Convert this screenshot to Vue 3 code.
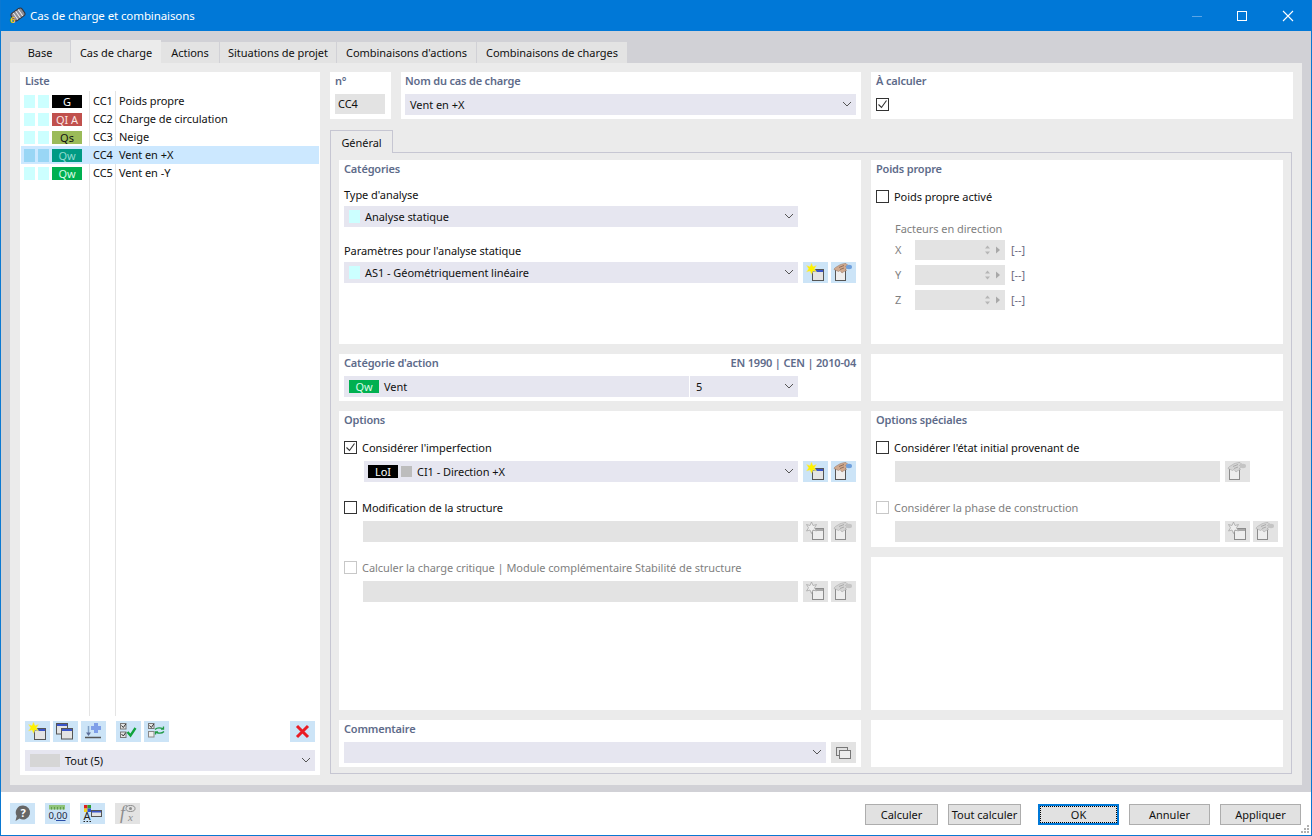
<script setup>
const tabs = ['Base', 'Cas de charge', 'Actions', 'Situations de projet', "Combinaisons d'actions", 'Combinaisons de charges']
const rows = [
  { cc: 'CC1', name: 'Poids propre', badge: 'G', cls: 'b-g' },
  { cc: 'CC2', name: 'Charge de circulation', badge: 'QI A', cls: 'b-q' },
  { cc: 'CC3', name: 'Neige', badge: 'Qs', cls: 'b-s' },
  { cc: 'CC4', name: 'Vent en +X', badge: 'Qw', cls: 'b-w', sel: true },
  { cc: 'CC5', name: 'Vent en -Y', badge: 'Qw', cls: 'b-w' },
]
const factors = ['X', 'Y', 'Z']
</script>

<template>
  <div class="window">
    <svg class="defs" width="0" height="0" aria-hidden="true">
      <defs>
        <symbol id="star" viewBox="0 0 25 21">
          <rect x="9.500" y="7.500" width="11" height="11" fill="#e4e4e4" stroke="#555" />
          <rect x="10" y="8" width="10" height="2" fill="#3b55c8" />
          <path d="M8.500 1L10 4.500 13.500 3.500 11.500 6.800 13.500 10 10 9 8.500 12.500 7 9 3.500 10 5.500 6.800 3.500 3.500 7 4.500z" fill="#fff200" stroke="#e8e4a0" stroke-width=".5" />
        </symbol>
        <symbol id="star-off" viewBox="0 0 25 21">
          <rect x="9.500" y="7.500" width="11" height="11" fill="#eee" stroke="#8c8c8c" />
          <rect x="10" y="8" width="10" height="2" fill="#a9a9a9" />
          <path d="M8.500 1L10 4.500 13.500 3.500 11.500 6.800 13.500 10 10 9 8.500 12.500 7 9 3.500 10 5.500 6.800 3.500 3.500 7 4.500z" fill="#eee" stroke="#a8a8a8" stroke-width=".8" />
        </symbol>
        <symbol id="hand" viewBox="0 0 25 21">
          <rect x="4.500" y="7.500" width="10" height="11" fill="#eee" stroke="#555" />
          <path d="M3 7.500C3.500 5.500 5.500 5 7 4c2-1.500 5-2.500 8-2.500l1.500 1.500-2 1.500 2 1-2 1.500 1 1.500-2.500 1-2 1.500-2-2.500-1.500 1z" fill="#d0a98e" stroke="#8f7060" stroke-width=".5" />
          <path d="M8 5.500l5-2M9 7.500l4-1.500" stroke="#7f6152" stroke-width=".8" />
          <ellipse cx="18" cy="5" rx="3" ry="2.200" fill="#6fa0dc" />
        </symbol>
        <symbol id="hand-off" viewBox="0 0 25 21">
          <rect x="4.500" y="7.500" width="10" height="11" fill="#eee" stroke="#8c8c8c" />
          <path d="M3 7.500C3.500 5.500 5.500 5 7 4c2-1.500 5-2.500 8-2.500l1.500 1.500-2 1.500 2 1-2 1.500 1 1.500-2.500 1-2 1.500-2-2.500-1.500 1z" fill="#d4d4d4" stroke="#a0a0a0" stroke-width=".5" />
          <path d="M8 5.500l5-2M9 7.500l4-1.500" stroke="#a0a0a0" stroke-width=".8" />
          <ellipse cx="18" cy="5" rx="3" ry="2.200" fill="#c4c4c4" />
        </symbol>
      </defs>
    </svg>

    <header class="titlebar">
      <svg class="logo" width="17" height="20" viewBox="0 -2 17 20">
        <g transform="rotate(-35 9 6.500)">
          <rect x="2.500" y="2" width="13" height="9" rx="2.500" fill="#8c8c94" stroke="#33333a" />
          <path d="M6 2.500v8M9 2.500v8M12 2.500v8" stroke="#eeeef2" stroke-width="1" />
        </g>
        <text x="1" y="15" class="logo-six">6</text>
      </svg>
      <span class="title-text">Cas de charge et combinaisons</span>
      <div class="controls">
        <svg width="12" height="12" viewBox="0 0 12 12"><path d="M2 6.500h10" stroke="#5ba5e6" /></svg>
        <svg width="12" height="12" viewBox="0 0 12 12"><rect x="1.500" y="1.500" width="9" height="9" fill="none" stroke="#fff" /></svg>
        <svg width="12" height="12" viewBox="0 0 12 12"><path d="M1 1l10 10M11 1L1 11" stroke="#fff" stroke-width="1.100" /></svg>
      </div>
    </header>

    <main class="main">
      <nav class="tabs">
        <div v-for="(t, i) in tabs" :key="t" class="tab" :class="{ active: i === 1 }">{{ t }}</div>
      </nav>

      <div class="content">
        <aside class="left panel">
          <div class="title">Liste</div>
          <div class="list">
            <span class="vline v1"></span>
            <span class="vline v2"></span>
            <div v-for="r in rows" :key="r.cc" class="row" :class="{ sel: r.sel }">
              <span class="sw"></span>
              <span class="sw"></span>
              <span class="badge" :class="r.cls">{{ r.badge }}</span>
              <span class="cc">{{ r.cc }}</span>
              <span class="nm">{{ r.name }}</span>
            </div>
          </div>
          <div class="toolbar">
            <button class="tool"><svg><use href="#star" /></svg></button>
            <button class="tool">
              <svg viewBox="0 0 25 21">
                <rect x="3.500" y="2.500" width="11" height="10.500" fill="#e4e4e4" stroke="#555" />
                <rect x="4" y="3" width="10" height="2" fill="#3b55c8" />
                <rect x="8.500" y="7.500" width="11" height="10.500" fill="#e4e4e4" stroke="#555" />
                <rect x="9" y="8" width="10" height="2" fill="#3b55c8" />
              </svg>
            </button>
            <button class="tool">
              <svg viewBox="0 0 25 21">
                <path d="M13 2h4v3h3v4h-3v3h-4V9h-3V5h3z" fill="#7f9fe8" />
                <path d="M7.500 5v8" stroke="#7f9fc4" stroke-width="1.500" />
                <path d="M5 11.500h5l-2.500 3.500z" fill="#5c6f99" />
                <path d="M4 16.500h16" stroke="#555" stroke-width="1.500" />
              </svg>
            </button>
            <span class="sep"></span>
            <button class="tool">
              <svg viewBox="0 0 25 21">
                <rect x="4.500" y="2.500" width="5.500" height="5.500" fill="#e4e4e4" stroke="#777" />
                <path d="M5.500 4.500l1.800 2 2.500-3.500" fill="none" stroke="#333" />
                <rect x="4.500" y="11" width="5.500" height="5.500" fill="#e4e4e4" stroke="#777" />
                <path d="M5.500 13l1.800 2 2.500-3.500" fill="none" stroke="#333" />
                <path d="M11.500 11l3 3.500 5-7.500" fill="none" stroke="#10a33c" stroke-width="2.300" />
              </svg>
            </button>
            <button class="tool">
              <svg viewBox="0 0 25 21">
                <rect x="4.500" y="2.500" width="5.500" height="5" fill="#e4e4e4" stroke="#777" />
                <path d="M5.500 4.500l1.800 2 2.500-3.500" fill="none" stroke="#333" />
                <rect x="4.500" y="10.500" width="5.500" height="5.500" fill="#eee" stroke="#888" />
                <path d="M11 8.500c2-2 5-2 8-.8M19.500 5.500v2.500h-2.500M20 10.500c-2 2-5 2-8 .8M11.500 13.500V11h2.500" fill="none" stroke="#1f9a45" stroke-width="1.300" />
              </svg>
            </button>
            <button class="tool del">
              <svg viewBox="0 0 25 21"><path d="M7 5l11 11M18 5L7 16" stroke="#ea1c24" stroke-width="3" /></svg>
            </button>
          </div>
          <div class="combo all">
            <span class="all-sw"></span>
            <span>Tout (5)</span>
            <svg class="chev" width="10" height="6" viewBox="0 0 10 6"><path d="M1 1l4 4 4-4" fill="none" stroke="#555" /></svg>
          </div>
        </aside>

        <section class="right">
          <div class="top">
            <div class="panel">
              <div class="title">n°</div>
              <div class="num">CC4</div>
            </div>
            <div class="panel name-panel">
              <div class="title">Nom du cas de charge</div>
              <div class="combo tight name-combo">
                <span>Vent en +X</span>
                <svg class="chev" width="10" height="6" viewBox="0 0 10 6"><path d="M1 1l4 4 4-4" fill="none" stroke="#555" /></svg>
              </div>
            </div>
            <div class="panel">
              <div class="title">À calculer</div>
              <div class="check on calc">
                <svg width="11" height="11" viewBox="0 0 11 11"><path d="M1.500 5.500l3 3 5-7" fill="none" stroke="#333" stroke-width="1.100" /></svg>
              </div>
            </div>
          </div>

          <div class="subtab">Général</div>
          <div class="frame">
            <div class="panel">
              <div class="title">Catégories</div>
              <div class="label first">Type d'analyse</div>
              <div class="combo w454 gap3">
                <span class="mini"></span><span>Analyse statique</span>
                <svg class="chev" width="10" height="6" viewBox="0 0 10 6"><path d="M1 1l4 4 4-4" fill="none" stroke="#555" /></svg>
              </div>
              <div class="label second">Paramètres pour l'analyse statique</div>
              <div class="line gap3">
                <div class="combo w454">
                  <span class="mini"></span><span>AS1 - Géométriquement linéaire</span>
                  <svg class="chev" width="10" height="6" viewBox="0 0 10 6"><path d="M1 1l4 4 4-4" fill="none" stroke="#555" /></svg>
                </div>
                <button class="tool"><svg><use href="#star" /></svg></button>
                <button class="tool"><svg><use href="#hand" /></svg></button>
              </div>
            </div>

            <div class="panel">
              <div class="title">Poids propre</div>
              <div class="chk-row first-chk"><span class="check"></span><span>Poids propre activé</span></div>
              <div class="label off factors-title">Facteurs en direction</div>
              <div v-for="f in factors" :key="f" class="factor">
                <span class="f-name">{{ f }}</span>
                <div class="f-field">
                  <svg width="20" height="14" viewBox="0 0 20 14">
                    <path d="M3 5.500l2.500-3 2.500 3zM3 8.500l2.500 3 2.500-3z" fill="#b5b5b5" />
                    <path d="M14 3.500l4 3.500-4 3.500z" fill="#a8a8a8" />
                  </svg>
                </div>
                <span class="f-unit">[--]</span>
              </div>
            </div>

            <div class="panel">
              <div class="title between"><span>Catégorie d'action</span><span>EN 1990 | CEN | 2010-04</span></div>
              <div class="combo w454 action tight">
                <span class="badge b-w2">Qw</span>
                <span class="act-name">Vent</span>
                <span class="act-num">5</span>
                <svg class="chev" width="10" height="6" viewBox="0 0 10 6"><path d="M1 1l4 4 4-4" fill="none" stroke="#555" /></svg>
              </div>
            </div>
            <div class="panel"></div>

            <div class="panel">
              <div class="title">Options</div>
              <div class="chk-row first-chk">
                <span class="check on">
                  <svg width="11" height="11" viewBox="0 0 11 11"><path d="M1.500 5.500l3 3 5-7" fill="none" stroke="#333" stroke-width="1.100" /></svg>
                </span>
                <span>Considérer l'imperfection</span>
              </div>
              <div class="line sub">
                <div class="combo grow lol-combo">
                  <span class="badge b-g lol">LoI</span>
                  <span class="gsq"></span>
                  <span>CI1 - Direction +X</span>
                  <svg class="chev" width="10" height="6" viewBox="0 0 10 6"><path d="M1 1l4 4 4-4" fill="none" stroke="#555" /></svg>
                </div>
                <button class="tool"><svg><use href="#star" /></svg></button>
                <button class="tool"><svg><use href="#hand" /></svg></button>
              </div>
              <div class="chk-row next-chk"><span class="check"></span><span>Modification de la structure</span></div>
              <div class="line sub sub-off">
                <div class="field grow"></div>
                <button class="tool dis"><svg><use href="#star-off" /></svg></button>
                <button class="tool dis"><svg><use href="#hand-off" /></svg></button>
              </div>
              <div class="chk-row next-chk off">
                <span class="check dis-check"></span>
                <span>Calculer la charge critique | Module complémentaire Stabilité de structure</span>
              </div>
              <div class="line sub sub-off">
                <div class="field grow"></div>
                <button class="tool dis"><svg><use href="#star-off" /></svg></button>
                <button class="tool dis"><svg><use href="#hand-off" /></svg></button>
              </div>
            </div>

            <div class="stack">
              <div class="panel special">
                <div class="title">Options spéciales</div>
                <div class="chk-row first-chk"><span class="check"></span><span>Considérer l'état initial provenant de</span></div>
                <div class="line sub-s">
                  <div class="field w325"></div>
                  <button class="tool dis"><svg><use href="#hand-off" /></svg></button>
                </div>
                <div class="chk-row next-chk off"><span class="check dis-check"></span><span>Considérer la phase de construction</span></div>
                <div class="line sub-s">
                  <div class="field w325"></div>
                  <button class="tool dis"><svg><use href="#star-off" /></svg></button>
                  <button class="tool dis"><svg><use href="#hand-off" /></svg></button>
                </div>
              </div>
              <div class="panel fill"></div>
            </div>

            <div class="panel">
              <div class="title">Commentaire</div>
              <div class="line tight">
                <div class="combo grow">
                  <svg class="chev" width="10" height="6" viewBox="0 0 10 6"><path d="M1 1l4 4 4-4" fill="none" stroke="#555" /></svg>
                </div>
                <button class="tool dis">
                  <svg viewBox="0 0 25 21">
                    <rect x="5.500" y="5.500" width="11" height="8" fill="#e0e0e0" stroke="#777" />
                    <rect x="8.500" y="8.500" width="11" height="8" fill="#eee" stroke="#777" />
                  </svg>
                </button>
              </div>
            </div>
            <div class="panel"></div>
          </div>
        </section>
      </div>
    </main>

    <footer class="footer">
      <button class="tool">
        <svg viewBox="0 0 25 21">
          <path d="M13 2.500a7 7 0 1 1-3.500 13l-4 2.500 1.200-5A7 7 0 0 1 13 2.500z" fill="#666" />
          <text x="13" y="13.500" class="help">?</text>
        </svg>
      </button>
      <button class="tool">
        <svg viewBox="0 0 25 21">
          <rect x="4" y="2" width="16" height="4.500" fill="#8fc47a" />
          <path d="M6.500 4v2.500M9.500 4v2.500M12.500 4v2.500M15.500 4v2.500M18.500 4v2.500" stroke="#5f9a50" />
          <text x="3.500" y="15.500" class="units">0,00</text>
          <path d="M11 17.500h9.500" stroke="#2a4fa8" />
        </svg>
      </button>
      <button class="tool">
        <svg viewBox="0 0 25 21">
          <rect x="4" y="2" width="3.500" height="3.500" fill="#e02020" />
          <rect x="7.500" y="2" width="3.500" height="3.500" fill="#30a030" />
          <rect x="4" y="5.500" width="3.500" height="3.500" fill="#f0d020" />
          <rect x="7.500" y="5.500" width="3.500" height="3.500" fill="#3050d0" />
          <text x="3.500" y="17" class="a">A</text>
          <path d="M3.500 18.500h1.500M6.500 18.500h1.500M9.500 18.500h1.500" stroke="#222" />
          <rect x="11.500" y="7.500" width="10" height="6" fill="#e4e4e4" stroke="#555" />
          <rect x="12" y="8" width="9" height="1.500" fill="#3b55c8" />
        </svg>
      </button>
      <button class="tool dis">
        <svg viewBox="0 0 25 21">
          <text x="5" y="16" class="fx">f</text>
          <text x="13" y="18" class="fx fx2">x</text>
          <ellipse cx="15.500" cy="5.500" rx="4.500" ry="3" fill="none" stroke="#8c8c8c" />
          <circle cx="15.500" cy="5.500" r="1.500" fill="#8c8c8c" />
        </svg>
      </button>

      <div class="actions">
        <button class="btn small">Calculer</button>
        <button class="btn small">Tout calculer</button>
        <button class="btn ok">OK</button>
        <button class="btn">Annuler</button>
        <button class="btn">Appliquer</button>
      </div>
      <svg class="grip" width="10" height="10" viewBox="0 0 10 10">
        <path d="M7 1h2v2H7zM4 4h2v2H4zM7 4h2v2H7zM1 7h2v2H1zM4 7h2v2H4zM7 7h2v2H7z" fill="#b0b0b0" />
      </svg>
    </footer>
  </div>
</template>

<style>
html, body { margin: 0; padding: 0; background: #fff; }
</style>

<style scoped>
.window {
  width: 1312px;
  height: 836px;
  box-sizing: border-box;
  border: 1px solid #0a78d2;
  border-top: 0;
  display: flex;
  flex-direction: column;
  font-family: "Noto Sans", "Open Sans", sans-serif;
  font-size: 11px;
  letter-spacing: -0.05px;
  color: #111;
  background: #fff;
  overflow: hidden;
}
.defs { position: absolute; }
.titlebar {
  height: 31px;
  flex: none;
  background: #0078d7;
  color: #fff;
  display: flex;
  align-items: center;
  padding-left: 8px;
  font-size: 11.500px;
  letter-spacing: -0.100px;
}
.logo { margin-right: 4px; flex: none; }
.logo-six { font: 700 9px "Noto Sans", sans-serif; fill: #f5c518; }
.title-text { line-height: 31px; }
.controls {
  margin-left: auto;
  display: flex;
  gap: 34px;
  padding-right: 17px;
  align-items: center;
}
.main {
  flex: 1;
  background: #d1d1d6;
  padding: 9px 9px 7px;
  display: flex;
  flex-direction: column;
  min-height: 0;
}
.tabs {
  height: 23px;
  flex: none;
  display: grid;
  grid-template-columns: 61px 90px 59px 117px 140px 151px;
  align-items: end;
}
.tab {
  height: 21px;
  line-height: 22px;
  text-align: center;
  background: #e3e3e3;
  border-right: 1px solid #d1d1d6;
  box-sizing: border-box;
}
.tab.active { height: 23px; background: #ebebeb; line-height: 25px; border-right: 0; }
.content {
  flex: 1;
  background: #ebebeb;
  padding: 9px 9px 10px 10px;
  display: grid;
  grid-template-columns: 300px 1fr;
  gap: 10px;
  min-height: 0;
}
.panel { background: #fff; padding: 0 5px; box-sizing: border-box; }
.name-panel { padding-left: 4px; }
.name-combo { padding-left: 2px; }
.title {
  height: 18px;
  line-height: 18px;
  font-weight: 600;
  color: #5e6b8a;
  letter-spacing: -0.180px;
}
.between { display: flex; justify-content: space-between; }
.left { display: flex; flex-direction: column; padding-bottom: 4px; }
.list {
  flex: 1;
  position: relative;
  margin: 1px -4px 0;
  padding-top: 1px;
}
.vline { position: absolute; top: 0; bottom: 0; width: 1px; background: #e4e4e4; }
.v1 { left: 68px; }
.v2 { left: 94px; }
.row {
  height: 18px;
  display: flex;
  align-items: center;
  padding-left: 3px;
  position: relative;
}
.row.sel { background: #cce8ff; }
.sw { width: 11px; height: 13px; background: #ccffff; margin-right: 3px; }
.row.sel .sw { background: #99d6f5; }
.badge {
  width: 30px;
  height: 13px;
  line-height: 13px;
  text-align: center;
  flex: none;
  display: inline-block;
}
.b-g { background: #000; color: #fff; }
.b-q { background: #c0504d; color: #fbe6e4; }
.b-s { background: #9bbb59; color: #111; }
.b-w { background: #00b050; color: #d9fbe8; }
.row.sel .b-w { background: #009a83; color: #8fdcd0; }
.b-w2 { background: #00b050; color: #d9fbe8; }
.cc { margin-left: 11px; width: 26px; margin-bottom: 2px; }
.nm { white-space: nowrap; margin-bottom: 2px; }
.toolbar { display: flex; gap: 3px; margin-top: 5px; flex: none; }
.sep { width: 4px; }
.del { margin-left: auto; }
.tool {
  width: 25px;
  height: 21px;
  flex: none;
  padding: 0;
  border: 0;
  background: #cce4f7;
  display: block;
}
.tool svg { width: 25px; height: 21px; display: block; }
.tool.dis { background: #e3e3e3; }
.combo {
  height: 21px;
  background: #e6e6f0;
  display: flex;
  align-items: center;
  padding-left: 5px;
  box-sizing: border-box;
  position: relative;
  flex: none;
}
.chev { position: absolute; right: 4px; top: 7px; }
.all { margin-top: 8px; padding-left: 5px; }
.all-sw { width: 30px; height: 13px; background: #d6d6d6; margin-right: 5px; }
.right { display: flex; flex-direction: column; min-width: 0; }
.top {
  display: grid;
  grid-template-columns: 61px 460px 1fr;
  gap: 10px;
  height: 47px;
  flex: none;
}
.num {
  margin-top: 4px;
  width: 50px;
  height: 20px;
  line-height: 20px;
  background: #e3e3e3;
  padding-left: 3px;
  box-sizing: border-box;
}
.tight { margin-top: 4px; }
.check {
  width: 13px;
  height: 13px;
  box-sizing: border-box;
  border: 1px solid #333;
  background: #fff;
  display: inline-flex;
  align-items: center;
  justify-content: center;
  flex: none;
}
.calc { margin-top: 8px; }
.subtab {
  margin: 11px 0 -1px 0;
  width: 63px;
  height: 23px;
  box-sizing: border-box;
  border: 1px solid #c6c6d2;
  border-bottom: 0;
  background: #ebebeb;
  text-align: center;
  line-height: 24px;
  position: relative;
  z-index: 1;
  flex: none;
}
.frame {
  flex: 1;
  margin: 0 1px 1px 0;
  border: 1px solid #c6c6d2;
  padding: 7px 8px 6px 8px;
  display: grid;
  grid-template-columns: 522px 412px;
  grid-template-rows: 184px 47px 299px 47px;
  gap: 10px;
  min-height: 0;
}
.label { height: 16px; line-height: 16px; }
.first { margin-top: 9px; }
.second { margin-top: 16px; }
.gap3 { margin-top: 3px; }
.w454 { width: 454px; }
.line { display: flex; gap: 3px; }
.line > .combo:first-child, .line > .field:first-child { margin-right: 2px; }
.grow { flex: 1; }
.mini { width: 11px; height: 13px; background: #ccffff; margin-right: 5px; }
.chk-row { height: 16px; display: flex; align-items: center; gap: 5px; white-space: nowrap; }
.first-chk { margin-top: 10px; }
.next-chk { margin-top: 17px; }
.off { color: #7f7f7f; }
.dis-check { border-color: #c8c8c8; }
.factors-title { margin: 17px 0 0 19px; }
.factor { display: flex; align-items: center; margin: 3px 0 0 19px; height: 20px; }
.factor + .factor { margin-top: 5px; }
.f-name { width: 20px; color: #7f7f7f; margin-bottom: 2px; }
.f-field {
  width: 90px;
  height: 20px;
  background: #e3e3e3;
  display: flex;
  align-items: center;
  justify-content: flex-end;
  padding-right: 3px;
  box-sizing: border-box;
}
.f-unit { margin-left: 6px; color: #6a6a80; margin-bottom: 2px; }
.action { padding-left: 5px; }
.act-name { margin-left: 5px; }
.act-num {
  position: absolute;
  left: 345px;
  top: 0;
  bottom: 0;
  line-height: 21px;
  padding-left: 6px;
  border-left: 1px solid #fff;
}
.sub { margin: 6px 0 0 20px; }
.sub-off { margin-left: 19px; }
.lol-combo { padding-left: 4px; }
.lol { width: 30px; }
.gsq { width: 11px; height: 11px; background: #bdbdbd; margin: 0 5px 0 3px; }
.field { height: 21px; background: #e3e3e3; }
.sub-s { margin: 6px 0 0 19px; }
.w325 { width: 325px; flex: none; }
.stack { display: flex; flex-direction: column; gap: 10px; min-height: 0; }
.special { height: 136px; flex: none; }
.fill { flex: 1; }
.footer {
  height: 43px;
  flex: none;
  display: flex;
  padding: 11px 10px 0 9px;
  gap: 10px;
  position: relative;
  box-sizing: border-box;
}
.help { font: 700 11px "Noto Sans", sans-serif; fill: #fff; text-anchor: middle; }
.units { font: 400 9.500px "Noto Sans", sans-serif; fill: #1a2440; }
.a { font: 400 11px "Noto Sans", sans-serif; fill: #222; }
.fx { font: italic 400 18px "Liberation Serif", serif; fill: #8c8c8c; }
.fx2 { font-size: 11px; }
.actions { margin-left: auto; display: flex; gap: 10px; padding-top: 1px; }
.btn {
  width: 81px;
  height: 21px;
  padding: 0;
  box-sizing: border-box;
  border: 1px solid #adadad;
  background: #e1e1e1;
  font: inherit;
  color: #111;
}
.btn.small { width: 73px; }
.btn.small + .ok { margin-left: 7px; }
.ok { border: 2px solid #0078d7; outline: 1px dotted #000; outline-offset: -3px; }
.grip { position: absolute; right: 1px; bottom: 1px; }
</style>
